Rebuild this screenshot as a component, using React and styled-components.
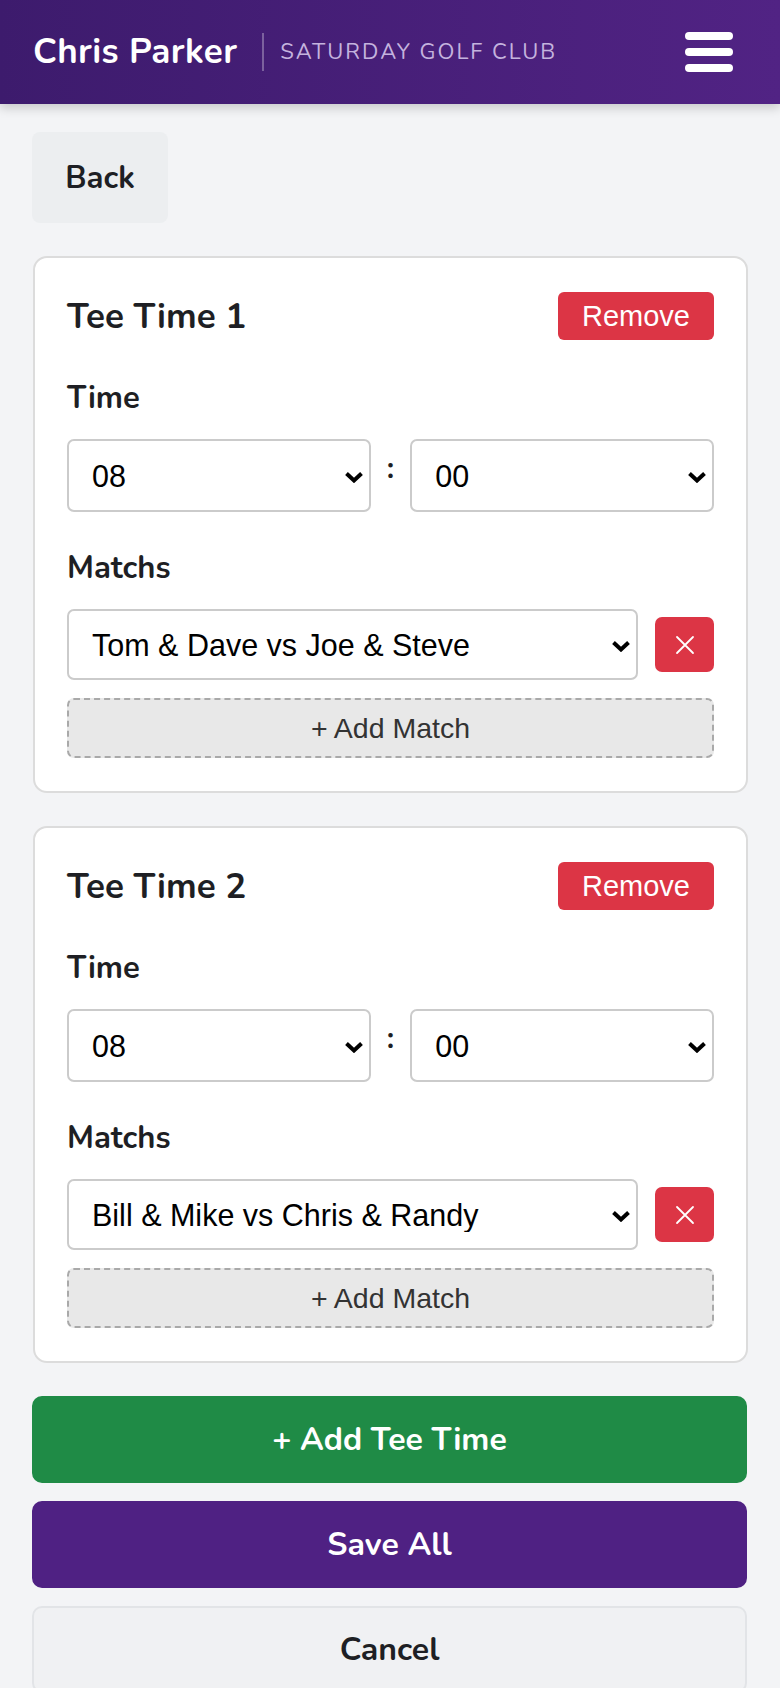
import styled, { createGlobalStyle } from "styled-components";

const GlobalStyle = createGlobalStyle`
  * {
    box-sizing: border-box;
  }
  body {
    margin: 0;
    background: #f3f4f6;
    font-family: "Nunito", Lato, "Noto Sans", sans-serif;
    color: #1e1f24;
  }
`;

const teeTimes = [
  { id: 1, hour: "08", minute: "00", matches: ["Tom & Dave vs Joe & Steve"] },
  { id: 2, hour: "08", minute: "00", matches: ["Bill & Mike vs Chris & Randy"] },
];

const hours = ["06", "07", "08", "09", "10", "11", "12"];
const minutes = ["00", "10", "20", "30", "40", "50"];

// native select with a custom chevron laid over its right end
function Dropdown({ value, options }) {
  return (
    <SelectWrap>
      <Select defaultValue={value}>
        {options.map((o) => (
          <option key={o}>{o}</option>
        ))}
      </Select>
      <Chevron width="20" height="12" viewBox="0 0 20 12">
        <path
          d="M2.5 2.5 L10 9.5 L17.5 2.5"
          fill="none"
          stroke="#000"
          strokeWidth="4"
          strokeLinejoin="miter"
        />
      </Chevron>
    </SelectWrap>
  );
}

export default function App() {
  return (
    <>
      <GlobalStyle />
      <Header>
        <Brand>
          <Name>Chris Parker</Name>
          <Club>Saturday Golf Club</Club>
        </Brand>
        <MenuButton aria-label="Menu">
          <span />
          <span />
          <span />
        </MenuButton>
      </Header>

      <Main>
        <BackButton>Back</BackButton>

        {teeTimes.map((t) => (
          <Card key={t.id}>
            <CardHeader>
              <CardTitle>Tee Time {t.id}</CardTitle>
              <RemoveButton>Remove</RemoveButton>
            </CardHeader>

            <Label>Time</Label>
            <TimeRow>
              <Dropdown value={t.hour} options={hours} />
              <Colon>:</Colon>
              <Dropdown value={t.minute} options={minutes} />
            </TimeRow>

            <Label $gap={37}>Matchs</Label>
            {t.matches.map((m) => (
              <MatchRow key={m}>
                <Dropdown value={m} options={[m]} />
                <DeleteButton aria-label="Remove match">
                  <svg width="20" height="20" viewBox="0 0 20 20">
                    <path
                      d="M2 2 L18 18 M18 2 L2 18"
                      stroke="#fff"
                      strokeWidth="1.8"
                      strokeLinecap="round"
                    />
                  </svg>
                </DeleteButton>
              </MatchRow>
            ))}
            <AddMatchButton>+ Add Match</AddMatchButton>
          </Card>
        ))}

        <Actions>
          <ActionButton $variant="green">+ Add Tee Time</ActionButton>
          <ActionButton $variant="purple">Save All</ActionButton>
          <ActionButton $variant="plain">Cancel</ActionButton>
        </Actions>
      </Main>
    </>
  );
}

const Header = styled.header`
  height: 104px;
  padding: 0 47px 0 33px;
  display: flex;
  align-items: center;
  justify-content: space-between;
  background: linear-gradient(90deg, #3d1b6d 0%, #512384 100%);
  box-shadow: 0 4px 10px rgba(0, 0, 0, 0.18);
`;

const Brand = styled.div`
  display: flex;
  align-items: center;
`;

const Name = styled.div`
  font-size: 35px;
  font-weight: 700;
  letter-spacing: 0.4px;
  color: #fff;
  padding-right: 25px;
  border-right: 2px solid rgba(255, 255, 255, 0.3);
  line-height: 38px;
`;

const Club = styled.div`
  padding-left: 16px;
  font-size: 22px;
  letter-spacing: 2px;
  text-transform: uppercase;
  color: #c4b3de;
`;

const MenuButton = styled.button`
  width: 48px;
  padding: 0;
  border: 0;
  background: none;
  display: flex;
  flex-direction: column;
  gap: 8px;

  span {
    display: block;
    height: 8px;
    border-radius: 4px;
    background: #fff;
  }
`;

const Main = styled.main`
  padding: 28px 33px 0 32px;
  display: flex;
  flex-direction: column;
  align-items: flex-start;
`;

const BackButton = styled.button`
  width: 136px;
  height: 91px;
  border: 0;
  border-radius: 8px;
  background: #eceef0;
  font-family: inherit;
  font-size: 31px;
  font-weight: 700;
  color: #1e1f24;
  margin-bottom: 33px;
`;

const Card = styled.section`
  width: 100%;
  margin-left: 1px;
  background: #fff;
  border: 2px solid #dcdcdc;
  border-radius: 14px;
  padding: 34px 32px 33px;
  margin-bottom: 33px;
`;

const CardHeader = styled.div`
  display: flex;
  align-items: center;
  justify-content: space-between;
  height: 48px;
`;

const CardTitle = styled.h2`
  margin: 0;
  font-size: 35px;
  font-weight: 700;
`;

const RemoveButton = styled.button`
  width: 156px;
  height: 48px;
  border: 0;
  border-radius: 6px;
  background: #dc3545;
  color: #fff;
  font-family: "Liberation Sans", Arial, sans-serif;
  font-size: 29px;
`;

const Label = styled.div`
  margin: ${(p) => p.$gap || 39}px 0 22px;
  font-size: 31px;
  font-weight: 700;
  line-height: 38px;
`;

const TimeRow = styled.div`
  display: flex;
  align-items: center;
  gap: 16px;
  height: 73px;
`;

const SelectWrap = styled.div`
  position: relative;
  flex: 1;
  min-width: 0;
  height: 100%;
`;

const Select = styled.select`
  appearance: none;
  width: 100%;
  height: 100%;
  padding: 0 44px 0 23px;
  border: 2px solid #cbcbcb;
  border-radius: 7px;
  background: #fff;
  font-family: "Liberation Sans", Arial, sans-serif;
  font-size: 30.5px;
  color: #000;
`;

const Chevron = styled.svg`
  position: absolute;
  right: 7px;
  top: 50%;
  margin-top: -5px;
  pointer-events: none;
`;

const Colon = styled.span`
  font-size: 30px;
  font-weight: 700;
  line-height: 1;
  margin-top: -14px;
`;

const MatchRow = styled.div`
  display: flex;
  align-items: center;
  gap: 17px;
  height: 71px;
`;

const DeleteButton = styled.button`
  flex: none;
  width: 59px;
  height: 55px;
  border: 0;
  border-radius: 7px;
  background: #dc3545;
  display: flex;
  align-items: center;
  justify-content: center;
`;

const AddMatchButton = styled.button`
  width: 100%;
  height: 60px;
  margin-top: 18px;
  border: 2px dashed #a9a9a9;
  border-radius: 7px;
  background: #e8e8e8;
  font-family: "Liberation Sans", Arial, sans-serif;
  font-size: 28.5px;
  color: #333;
`;

const Actions = styled.div`
  width: 100%;
  display: flex;
  flex-direction: column;
  gap: 18px;
`;

const variants = {
  green: "background: #1f8b46; color: #fff; border-color: #1f8b46;",
  purple: "background: #4f2183; color: #fff; border-color: #4f2183;",
  plain: "background: #f0f1f3; color: #1e1f24; border-color: #e2e4e7;",
};

const ActionButton = styled.button`
  width: 100%;
  height: 87px;
  border: 2px solid;
  border-radius: 10px;
  font-family: inherit;
  font-size: 32px;
  font-weight: 700;
  ${(p) => variants[p.$variant]}
`;
